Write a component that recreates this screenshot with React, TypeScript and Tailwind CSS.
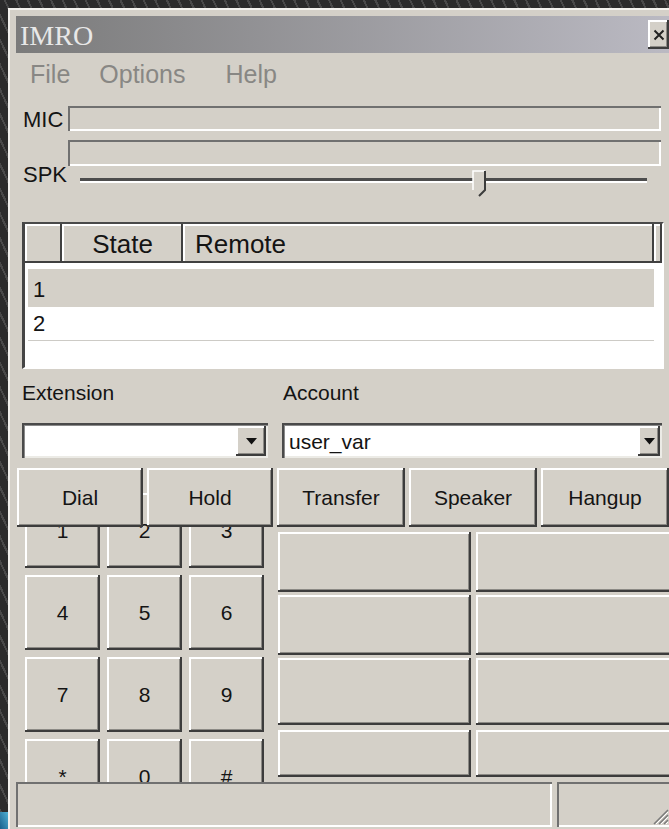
import type { ReactNode } from 'react'

// classic 3D bevels
const raised =
  'shadow-[inset_-2px_-2px_0_0_#3c3c3c,inset_2px_2px_0_0_#ffffff,inset_-3px_-3px_0_0_#8c8a85]'
const sunken = 'shadow-[inset_2px_2px_0_0_#707070,inset_-2px_-2px_0_0_#ffffff]'
const field =
  'shadow-[inset_2px_2px_0_0_#4a4a4a,inset_3px_3px_0_0_#8a8a8a,inset_-2px_-2px_0_0_#ecebe6]'
const headerCell = 'shadow-[inset_-2px_-2px_0_0_#404040,inset_2px_2px_0_0_#ffffff]'

function Btn({ children, className = '' }: { children?: ReactNode; className?: string }) {
  return (
    <div
      className={`${raised} bg-[#d4d0c8] flex items-center justify-center text-[21px] leading-none shrink-0 ${className}`}
    >
      {children}
    </div>
  )
}

function DropArrow({ className = '' }: { className?: string }) {
  return (
    <div className={`${raised} bg-[#d4d0c8] flex items-center justify-center shrink-0 ${className}`}>
      <svg width="11" height="7" viewBox="0 0 11 7">
        <polygon points="0,0 11,0 5.5,6.5" fill="#111" />
      </svg>
    </div>
  )
}

function Combo({ value, width, arrow }: { value?: string; width: string; arrow: string }) {
  return (
    <div className={`${field} ${width} h-[35px] bg-white flex items-stretch p-[3px] pr-[2px] pb-[2px]`}>
      <div className="flex-1 flex items-center pl-[4px] text-[21px] leading-none">{value}</div>
      <DropArrow className={arrow} />
    </div>
  )
}

const keys = ['1', '2', '3', '4', '5', '6', '7', '8', '9', '*', '0', '#']

export default function App() {
  return (
    <div className="w-[669px] h-[829px] overflow-hidden flex bg-[#2b2b2b] bg-[repeating-linear-gradient(65deg,#2b2b2b_0px,#2b2b2b_7px,#494949_7px,#494949_9px,#2b2b2b_9px,#2b2b2b_10.5px)] font-['Liberation_Sans',Arial,sans-serif] text-[#141414]">
      {/* desktop strip on the left */}
      <div className="w-[8px] shrink-0 flex flex-col justify-end">
        <div className="h-[17px] bg-gradient-to-tr from-[#17608c] to-[#4fb0d3]" />
      </div>

      {/* window */}
      <div className="mt-[8px] w-[665px] h-[823px] shrink-0 bg-[#d4d0c8] border-l-2 border-t-2 border-[#f2f1ed] pl-[6px] pt-[6px] flex flex-col">
        {/* title bar */}
        <div className="h-[37px] shrink-0 flex items-center bg-gradient-to-r from-[#7b7b7b] to-[#bbbac3] pl-[4px] pr-[4px]">
          <span className="font-['Liberation_Serif',serif] text-[28px] leading-none text-[#e8e8e8] mt-[2px]">
            IMRO
          </span>
          <div className={`${raised} ml-auto w-[21px] h-[29px] bg-[#d4d0c8] flex items-center justify-center`}>
            <svg width="12" height="12" viewBox="0 0 12 12">
              <path d="M1.5 1.5 L10.5 10.5 M10.5 1.5 L1.5 10.5" stroke="#222" strokeWidth="2" />
            </svg>
          </div>
        </div>

        {/* menu */}
        <div className="h-[42px] shrink-0 flex items-center text-[25px] leading-none text-[#888784]">
          <span className="ml-[14px]">File</span>
          <span className="ml-[29px]">Options</span>
          <span className="ml-[40px]">Help</span>
        </div>

        {/* MIC level */}
        <div className="mt-[11px] flex items-end pl-[7px] shrink-0">
          <span className="w-[45px] text-[22px] leading-none">MIC</span>
          <div className={`${sunken} w-[593px] h-[25px]`} />
        </div>

        {/* SPK level + volume */}
        <div className="mt-[9px] flex pl-[7px] shrink-0">
          <div className="w-[45px] flex items-end pb-[12px]">
            <span className="text-[22px] leading-none">SPK</span>
          </div>
          <div className="w-[593px]">
            <div className={`${sunken} h-[26px]`} />
            <div className="h-[32px] relative">
              <div className="pt-[12px] ml-[12px] w-[567px]">
                <div className="h-[3px] bg-[#4d4d4d]" />
                <div className="h-[2px] bg-white" />
              </div>
              <svg className="absolute left-[404px] top-[4px]" width="15" height="27" viewBox="0 0 15 27">
                <path d="M1 1 H13 V20 L7 26 L1 20 Z" fill="#d4d0c8" />
                <path d="M1 20 V1 H13" stroke="#ffffff" strokeWidth="1.5" fill="none" />
                <path d="M13 1 V20 L7 26" stroke="#3c3c3c" strokeWidth="2" fill="none" />
              </svg>
            </div>
          </div>
        </div>

        {/* call list */}
        <div className="mt-[24px] ml-[6px] w-[642px] h-[147px] shrink-0 flex flex-col border-l-[3px] border-t-2 border-r-2 border-b-2 border-l-[#454545] border-t-[#4a4a4a] border-r-white border-b-white">
          <div className="h-[39px] shrink-0 flex text-[26px] leading-none bg-[#d4d0c8]">
            <div className={`${headerCell} w-[37px]`} />
            <div className={`${headerCell} w-[121px] flex items-center justify-center`}>State</div>
            <div className={`${headerCell} w-[471px] flex items-center pl-[12px]`}>Remote</div>
            <div className={`${headerCell} flex-1`} />
          </div>
          <div className="flex-1 bg-white pt-[6px] pl-[3px] text-[22px] leading-none">
            <div className="w-[626px] h-[38px] bg-[#d4d0c8] flex items-center pl-[5px] pt-[3px]">1</div>
            <div className="w-[626px] h-[34px] border-b border-[#cdcbc6] flex items-center pl-[5px]">2</div>
          </div>
        </div>

        {/* extension / account */}
        <div className="mt-[13px] flex pl-[6px] text-[21px] leading-none shrink-0">
          <span className="w-[261px]">Extension</span>
          <span>Account</span>
        </div>
        <div className="mt-[20px] flex gap-[14px] pl-[6px] shrink-0">
          <Combo width="w-[246px]" arrow="w-[30px]" />
          <Combo width="w-[380px]" arrow="w-[22px]" value="user_var" />
        </div>

        {/* call controls, keypad and spare buttons */}
        <div className="mt-[10px] h-[314px] shrink-0 overflow-hidden pl-[1px]">
          <div className="relative z-10 h-[59px] flex gap-[4px]">
            <Btn className="w-[126px] h-[59px]">Dial</Btn>
            <Btn className="w-[126px] h-[59px]">Hold</Btn>
            <Btn className="w-[128px] h-[59px]">Transfer</Btn>
            <Btn className="w-[128px] h-[59px]">Speaker</Btn>
            <Btn className="w-[128px] h-[59px]">Hangup</Btn>
          </div>
          <div className="flex items-start">
            <div className="-mt-[34px] ml-[8px] grid grid-cols-[repeat(3,75px)] auto-rows-[75px] gap-[7px]">
              {keys.map((k) => (
                <Btn key={k} className="w-[75px] h-[75px]">
                  {k}
                </Btn>
              ))}
            </div>
            <div className="mt-[5px] ml-[14px] flex flex-col">
              <div className="flex gap-[5px]">
                <Btn className="w-[193px] h-[60px]" />
                <Btn className="w-[197px] h-[60px]" />
              </div>
              <div className="mt-[3px] flex gap-[5px]">
                <Btn className="w-[193px] h-[60px]" />
                <Btn className="w-[197px] h-[60px]" />
              </div>
              <div className="mt-[3px] flex gap-[5px]">
                <Btn className="w-[193px] h-[67px]" />
                <Btn className="w-[197px] h-[67px]" />
              </div>
              <div className="mt-[5px] flex gap-[5px]">
                <Btn className="w-[193px] h-[47px]" />
                <Btn className="w-[197px] h-[47px]" />
              </div>
            </div>
          </div>
        </div>

        {/* status bar */}
        <div className="h-[45px] shrink-0 flex gap-[5px]">
          <div className={`${sunken} w-[536px]`} />
          <div className={`${sunken} flex-1 flex items-end justify-start pl-[94px] pb-[2px]`}>
            <svg width="18" height="18" viewBox="0 0 18 18">
              <path d="M17 3 L3 17 M17 8 L8 17 M17 13 L13 17" stroke="#7a7a7a" strokeWidth="1.5" />
              <path d="M17 5 L5 17 M17 10 L10 17 M17 15 L15 17" stroke="#ffffff" strokeWidth="1" />
            </svg>
          </div>
        </div>
      </div>
    </div>
  )
}
